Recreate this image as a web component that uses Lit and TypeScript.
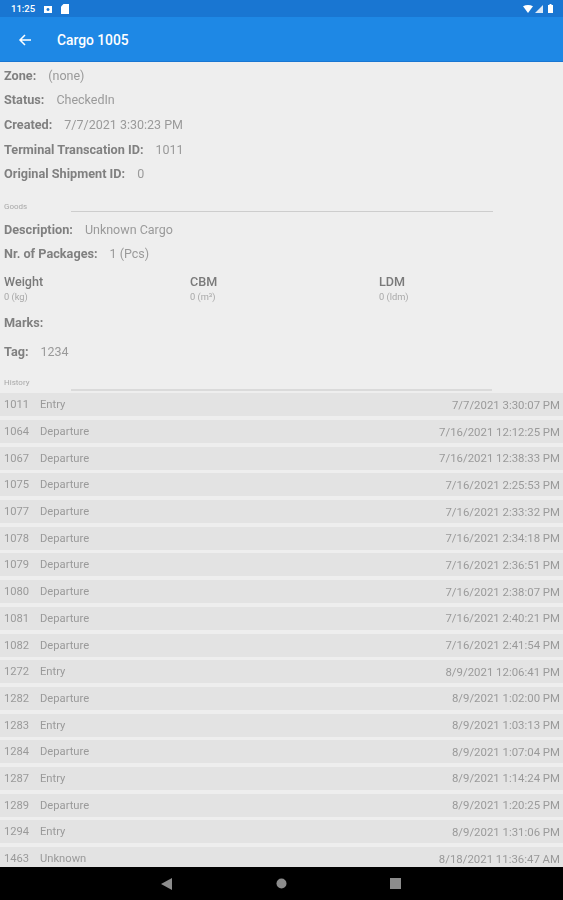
import { LitElement, html, css, svg } from "lit";
import { customElement } from "lit/decorators.js";

const HISTORY: [string, string, string][] = [
  ["1011", "Entry", "7/7/2021 3:30:07 PM"],
  ["1064", "Departure", "7/16/2021 12:12:25 PM"],
  ["1067", "Departure", "7/16/2021 12:38:33 PM"],
  ["1075", "Departure", "7/16/2021 2:25:53 PM"],
  ["1077", "Departure", "7/16/2021 2:33:32 PM"],
  ["1078", "Departure", "7/16/2021 2:34:18 PM"],
  ["1079", "Departure", "7/16/2021 2:36:51 PM"],
  ["1080", "Departure", "7/16/2021 2:38:07 PM"],
  ["1081", "Departure", "7/16/2021 2:40:21 PM"],
  ["1082", "Departure", "7/16/2021 2:41:54 PM"],
  ["1272", "Entry", "8/9/2021 12:06:41 PM"],
  ["1282", "Departure", "8/9/2021 1:02:00 PM"],
  ["1283", "Entry", "8/9/2021 1:03:13 PM"],
  ["1284", "Departure", "8/9/2021 1:07:04 PM"],
  ["1287", "Entry", "8/9/2021 1:14:24 PM"],
  ["1289", "Departure", "8/9/2021 1:20:25 PM"],
  ["1294", "Entry", "8/9/2021 1:31:06 PM"],
  ["1463", "Unknown", "8/18/2021 11:36:47 AM"],
];

@customElement("app-root")
export class AppRoot extends LitElement {
  static styles = css`
    :host { display: flex; flex-direction: column; width: 563px; height: 900px; overflow: hidden;
      font-family: Roboto, "Liberation Sans", sans-serif; background: #eeeeee; color: #9a9a9a; font-size: 12.5px; }
    .status { height: 17px; flex: none; background: #1976d2; color: #fff; display: flex; align-items: center;
      padding: 0 10px 0 11px; font-size: 9.5px; font-weight: 500; gap: 9px; }
    .status .sp { flex: 1; }
    .status svg { display: block; }
    .right { display: flex; align-items: center; gap: 2px; }
    .bar { height: 45px; flex: none; background: #1e88e5; color: #fff; display: flex; align-items: center;
      padding: 2px 0 0 18px; gap: 25px; font-size: 13.8px; font-weight: 500; border-bottom: 1px solid #1976d2; box-sizing: border-box; }
    .content { flex: 1; min-height: 0; overflow: hidden; display: flex; flex-direction: column; padding-top: 1px; }
    .soft { filter: blur(0.35px); }
    .fields { display: flex; flex-direction: column; }
    .f { height: 24.6px; display: flex; align-items: center; padding-left: 4px; gap: 12px; }
    .k { font-weight: 700; color: #808080; font-size: 12.7px; }
    .sec { position: relative; padding-left: 4px; font-size: 8px; color: #a8a8a8; display: flex; align-items: flex-start; line-height: 10px; }
    .sec i { position: absolute; left: 71px; width: 422px; background: #cdcdcd; }
    .goods { margin-top: 8px; height: 23px; padding-top: 8px; box-sizing: border-box; }
    .goods i { top: 17px; height: 1px; }
    .hist { margin-top: 10px; height: 20px; padding-top: 5px; box-sizing: border-box; }
    .hist i { top: 16px; height: 2px; width: 421px; background: #dadada; }
    .cols { display: grid; grid-template-columns: 186px 189px 1fr; padding: 8px 0 0 4px; height: 44px; box-sizing: border-box; }
    .cols b { display: block; font-weight: 500; color: #7a7a7a; font-size: 12.6px; line-height: 16px; }
    .cols span { display: block; font-size: 9.3px; color: #a8a8a8; line-height: 13px; }
    .rows { display: flex; flex-direction: column; gap: 3.7px; }
    .row { height: 23px; flex: none; background: #e3e3e3; display: flex; align-items: center; padding: 0 3px 0 4px; font-size: 11.2px; }
    .row .id { width: 36px; }
    .row .d { margin-left: auto; font-size: 11.4px; }
    .tag { margin-top: 4px; }
    .nav { height: 33px; flex: none; background: #000; display: flex; align-items: center; justify-content: center; gap: 103px; padding-right: 1px; }
    .nav svg { display: block; }
    .batt { margin-left: 3px; }
  `;

  render() {
    return html`
      <div class="status">
        <span>11:25</span>
        <svg width="8" height="8" viewBox="0 0 8 8"><path fill="#fff" fill-rule="evenodd" d="M0 1h8v7H0zM4 3a1.5 1.5 0 1 0 .01 0z"/></svg>
        <svg width="8" height="10" viewBox="0 0 8 10"><path fill="#fff" d="M2.5 0H8v10H0V2.5z"/></svg>
        <span class="sp"></span>
        <div class="right">
          <svg width="10" height="8" viewBox="0 0 10 8"><path fill="#fff" d="M0 1.2Q5-1.2 10 1.2L5 8z"/></svg>
          <svg width="8" height="8" viewBox="0 0 8 8"><path fill="#dbe8f6" d="M8 0v8H0z"/></svg>
          <svg class="batt" width="5" height="9" viewBox="0 0 5 9"><path fill="#fff" d="M1.5 0h2v1H5v8H0V1h1.5z"/></svg>
        </div>
      </div>
      <div class="bar">
        <svg width="14" height="14" viewBox="0 0 14 14">${svg`<path fill="none" stroke="#fff" stroke-width="1.5" d="M13 7H2M7 2 2 7l5 5"/>`}</svg>
        <span>Cargo 1005</span>
      </div>
      <div class="content">
        <div class="soft">
          <div class="fields">
            <div class="f"><span class="k">Zone:</span><span>(none)</span></div>
            <div class="f"><span class="k">Status:</span><span>CheckedIn</span></div>
            <div class="f"><span class="k">Created:</span><span>7/7/2021 3:30:23 PM</span></div>
            <div class="f"><span class="k">Terminal Transcation ID:</span><span>1011</span></div>
            <div class="f"><span class="k">Original Shipment ID:</span><span>0</span></div>
          </div>
          <div class="sec goods">Goods<i></i></div>
          <div class="fields">
            <div class="f"><span class="k">Description:</span><span>Unknown Cargo</span></div>
            <div class="f"><span class="k">Nr. of Packages:</span><span>1 (Pcs)</span></div>
          </div>
          <div class="cols">
            <div><b>Weight</b><span>0 (kg)</span></div>
            <div><b>CBM</b><span>0 (m³)</span></div>
            <div><b>LDM</b><span>0 (ldm)</span></div>
          </div>
          <div class="fields">
            <div class="f"><span class="k">Marks:</span></div>
            <div class="f tag"><span class="k">Tag:</span><span>1234</span></div>
          </div>
          <div class="sec hist">History<i></i></div>
          <div class="rows">
            ${HISTORY.map(([id, t, d]) => html`<div class="row"><span class="id">${id}</span><span>${t}</span><span class="d">${d}</span></div>`)}
          </div>
        </div>
      </div>
      <div class="nav">
        <svg width="12" height="12" viewBox="0 0 12 12"><path fill="#8c8c8c" d="M11 0v12L0 6z"/></svg>
        <svg width="11" height="11" viewBox="0 0 11 11"><circle cx="5.5" cy="5.5" r="5" fill="#8c8c8c"/></svg>
        <svg width="11" height="11" viewBox="0 0 11 11"><rect width="11" height="11" fill="#8c8c8c"/></svg>
      </div>
    `;
  }
}
